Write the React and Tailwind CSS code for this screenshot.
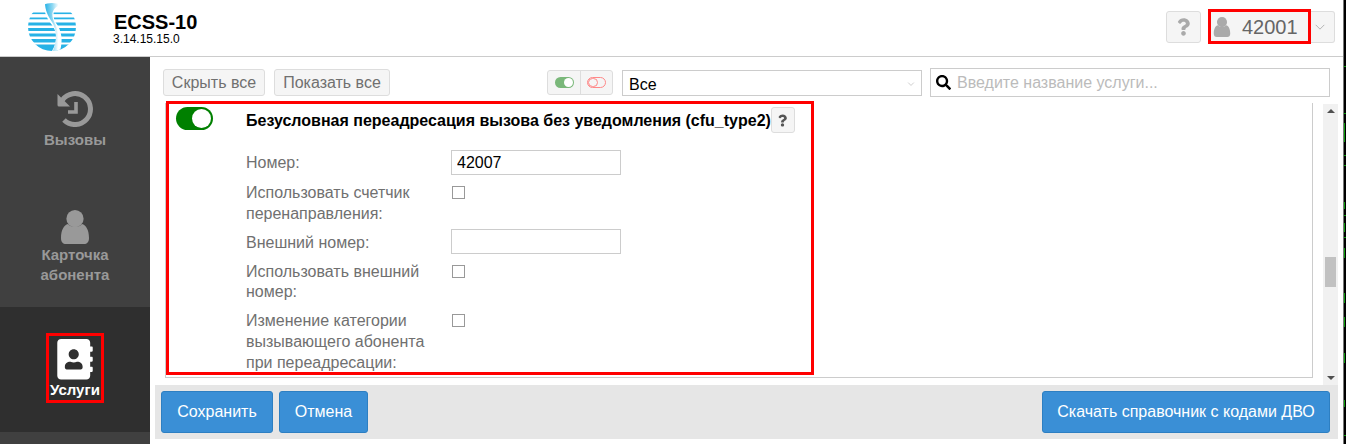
import React from "react";
import { FaAddressBook, FaSearch, FaQuestion } from "react-icons/fa";

const UserIcon = ({ className }) => (
  <svg viewBox="0 0 30 34" className={className} fill="currentColor">
    <circle cx="15" cy="8.7" r="8.6" />
    <path d="M1 28 C1 20 4 15 8 14 C11 17.8 19 17.8 22 14 C26 15 29 20 29 28 C29 32 27 34 24 34 H6 C3 34 1 32 1 28 Z" />
  </svg>
);

const HistoryIcon = ({ className }) => (
  <svg viewBox="0 0 36 36" className={className} fill="none" stroke="currentColor">
    <path d="M5.3 9.1 A15.5 15.5 0 1 1 7 29" strokeWidth="5" />
    <path d="M0.5 3 V14 Q0.5 15.5 2 15.5 H13 Z" fill="currentColor" stroke="none" />
    <path d="M19 11 V21 H11" strokeWidth="3.6" />
  </svg>
);

const Chevron = ({ className }) => (
  <svg viewBox="0 0 12 7" className={className} fill="none" stroke="currentColor" strokeWidth="1">
    <path d="M1 1 L6 6 L11 1" />
  </svg>
);

const Logo = () => (
  <svg viewBox="0 0 48 48" className="w-[48px] h-[48px]">
    <defs>
      <clipPath id="lc"><circle cx="24" cy="24" r="24" /></clipPath>
      <linearGradient id="lg" x1="0" y1="0" x2="1" y2="0">
        <stop offset="0" stopColor="#27b2e6" />
        <stop offset="0.55" stopColor="#8fd8f2" />
        <stop offset="1" stopColor="#ffffff" />
      </linearGradient>
    </defs>
    <g clipPath="url(#lc)" fill="#27b2e6">
      <rect x="0" y="9.5" width="48" height="1.6" />
      <rect x="0" y="14.5" width="48" height="1.8" />
      <rect x="0" y="19.5" width="48" height="3" />
      <rect x="0" y="25" width="48" height="3" />
      <rect x="0" y="30.5" width="48" height="3" />
      <rect x="0" y="36" width="48" height="3.5" />
      <rect x="0" y="41.5" width="48" height="6.5" />
      <path d="M16 0 C16 8 18 15 24 22 C29 29 30 38 24 48 L32 48 C35 38 34 28 28 20 C24 14 25 6 30 0 Z" fill="#ffffff" />
      <path d="M17 0 C17 7 20 13 24 19 C28 25 30 36 25 48 L29 48 C32 36 30 26 26.5 19.5 C23.5 13 23 7 30 3 L30 0 Z" fill="url(#lg)" />
    </g>
  </svg>
);

const NavItem = ({ icon, label, active, bump = "" }) => (
  <div className={`h-[125px] flex items-center justify-center ${active ? "bg-[#2f2f2f]" : "bg-[#404040]"}`}>
    <div className={`flex flex-col items-center text-center font-bold text-[15px] leading-[20.5px] ${bump} ${active ? "text-white border-[3px] border-[#ff0000] w-[58px] h-[70px] pt-[3px]" : "text-[#999]"}`}>
      {icon}
      {label}
    </div>
  </div>
);

const BlueBtn = ({ children, className = "" }) => (
  <button className={`h-[42px] bg-[#3a8fd6] border border-[#2d7fc2] rounded-[3px] text-white text-[16px] ${className}`}>
    {children}
  </button>
);

const GrayBtn = ({ children, className = "" }) => (
  <button className={`bg-[#f5f5f5] border border-[#ddd] rounded-[3px] text-[#707070] text-[16px] ${className}`}>
    {children}
  </button>
);

const Check = () => <input type="checkbox" className="appearance-none w-[13px] h-[13px] border border-[#999] bg-white block" />;

const Marks = [
  [66, 1, 2], [113, 1, 2], [123, 19, 1], [155, 1, 2], [165, 1, 2], [202, 7, 1], [215, 1, 2], [223, 9, 1], [237, 1, 2],
  [248, 10, 1], [293, 10, 1], [317, 10, 1], [353, 10, 1], [400, 7, 1], [435, 1, 2],
];

export default function App() {
  return (
    <div className="w-[1346px] h-[444px] flex overflow-hidden bg-white text-[16px] [font-family:'Liberation_Sans',Arial,sans-serif]">
      <div className="w-[1343px] flex flex-col">
        {/* header */}
        <header className="h-[57px] flex items-start border-b border-[#ccc] shrink-0">
          <div className="ml-[28px] mt-[3px]"><Logo /></div>
          <div className="ml-[38px] mt-[11px] text-black">
            <div className="font-bold text-[20px] leading-[23px]">ECSS-10</div>
            <div className="text-[12px] leading-[10px] -ml-[1px]">3.14.15.15.0</div>
          </div>
          <div className="ml-auto mr-[8px] mt-[9px] flex items-start">
            <GrayBtn className="w-[35px] h-[32px] mt-[2px] flex items-center justify-center">
              <FaQuestion className="w-[13px] h-[18px] text-[#aaa]" />
            </GrayBtn>
            <div className="ml-[7px] w-[103px] h-[35px] border-[3px] border-[#ff0000] bg-[#f5f5f5] flex items-center pl-[2px]">
              <UserIcon className="w-[18px] h-[20px] text-[#aaa]" />
              <span className="ml-[11px] text-[20px] text-[#666]">42001</span>
            </div>
            <GrayBtn className="w-[24px] h-[32px] mt-[2px] flex items-center justify-center pr-[5px] border-l-0 rounded-l-none">
              <Chevron className="w-[12px] h-[6px] text-[#aaa]" />
            </GrayBtn>
          </div>
        </header>

        <div className="flex flex-1 min-h-0">
          {/* sidebar */}
          <nav className="w-[150px] bg-[#404040] shrink-0">
            <NavItem bump="mt-[3px]" icon={<HistoryIcon className="w-[36px] h-[36px] mb-[3px] text-[#999]" />} label="Вызовы" />
            <NavItem bump="mt-[6px]" icon={<UserIcon className="w-[30px] h-[34px] mb-[1px] text-[#999]" />} label={<span>Карточка<br />абонента</span>} />
            <NavItem bump="mb-[3px]" active icon={<FaAddressBook className="w-[38px] h-[43px] text-white" />} label="Услуги" />
          </nav>

          {/* main */}
          <main className="flex-1 min-w-0 flex flex-col">
            {/* toolbar */}
            <div className="h-[44px] shrink-0 pt-[11px] pb-[4px] pl-[13px] flex items-center">
              <GrayBtn className="w-[102px] h-[27px]">Скрыть все</GrayBtn>
              <GrayBtn className="ml-[9px] w-[116px] h-[27px]">Показать все</GrayBtn>
              <div className="ml-[157px] w-[66px] h-[25px] flex bg-[#f5f5f5] border border-[#ddd] rounded-[3px]">
                <div className="w-[33px] flex items-center justify-center border-r border-[#ddd]">
                  <div className="w-[19px] h-[11px] rounded-full bg-[#7ab87a] flex justify-end items-center pr-[1px]">
                    <div className="w-[9px] h-[9px] rounded-full bg-white" />
                  </div>
                </div>
                <div className="flex-1 flex items-center justify-center">
                  <div className="w-[19px] h-[11px] rounded-full border border-[#f88] flex items-center">
                    <div className="w-[10px] h-[9px] rounded-full border border-[#f88]" />
                  </div>
                </div>
              </div>
              <div className="relative ml-[9px] w-[300px] h-[26px]">
                <select className="appearance-none w-full h-full bg-white border border-[#ccc] pl-[6px] pt-[2px] text-[16px] text-black outline-none">
                  <option>Все</option>
                </select>
                <Chevron className="absolute right-[7px] top-[12px] w-[8px] h-[4px] text-[#aaa]" />
              </div>
              <div className="ml-[8px] w-[400px] h-[29px] flex items-center border border-[#ccc] pl-[5px]">
                <FaSearch className="w-[15px] h-[15px] text-black shrink-0" />
                <input
                  placeholder="Введите название услуги..."
                  className="ml-[6px] flex-1 min-w-0 text-[16px] outline-none placeholder:text-[#bbb]"
                />
              </div>
            </div>

            {/* panel row */}
            <div className="h-[284px] shrink-0 flex pl-[15px]">
              <div className="w-[1148px] h-[275px] mt-[2px] border-l border-r border-b border-[#ccc]">
                <section className="-mt-[2px] w-[648px] h-[274px] border-[3px] border-[#ff0000] overflow-hidden">
                  <div className="flex items-start pl-[7px] pt-[3px]">
                    <div className="w-[37px] h-[23px] rounded-full bg-[#008000] flex items-center justify-end pr-[2px]">
                      <div className="w-[19px] h-[19px] rounded-full bg-white" />
                    </div>
                    <h3 className="ml-[33px] mt-[3px] font-bold text-[16px] leading-[21px] text-black whitespace-nowrap">
                      Безусловная переадресация вызова без уведомления (cfu_type2)
                    </h3>
                    <button className="w-[24px] h-[26px] bg-[#f5f5f5] border border-[#ddd] rounded-[3px] flex items-center justify-center">
                      <FaQuestion className="w-[9px] h-[13px] text-[#555]" />
                    </button>
                  </div>
                  <div className="pl-[77px] text-[#707070] leading-[20.8px]">
                    <div className="mt-[17px] flex items-start h-[25px]">
                      <label className="w-[205px] pt-[3px]">Номер:</label>
                      <input defaultValue="42007" className="w-[170px] h-[25px] border border-[#ccc] px-[5px] text-black outline-none" />
                    </div>
                    <div className="mt-[8px] flex items-start">
                      <label className="w-[205px] pr-[15px]">Использовать счетчик перенаправления:</label>
                      <div className="ml-[1px] mt-[3px]"><Check /></div>
                    </div>
                    <div className="mt-[4px] flex items-start h-[25px]">
                      <label className="w-[205px] pt-[4px]">Внешний номер:</label>
                      <input className="w-[170px] h-[25px] border border-[#ccc] px-[5px] text-black outline-none" />
                    </div>
                    <div className="mt-[8px] flex items-start">
                      <label className="w-[205px] pr-[15px]">Использовать внешний номер:</label>
                      <div className="ml-[1px] mt-[3px]"><Check /></div>
                    </div>
                    <div className="mt-[8px] flex items-start">
                      <label className="w-[205px] pr-[15px]">Изменение категории вызывающего абонента при переадресации:</label>
                      <div className="ml-[1px] mt-[3px]"><Check /></div>
                    </div>
                  </div>
                </section>
              </div>

              {/* scrollbar */}
              <div className="ml-[10px] mt-[3px] w-[15px] h-[281px] bg-[#f1f1f1] flex flex-col items-center">
                <div className="mt-[5px] w-0 h-0 border-l-[4px] border-r-[4px] border-b-[4px] border-l-transparent border-r-transparent border-b-[#505050]" />
                <div className="mt-[144px] w-[11px] h-[30px] bg-[#c1c1c1]" />
                <div className="mt-auto mb-[5px] w-0 h-0 border-l-[4px] border-r-[4px] border-t-[4px] border-l-transparent border-r-transparent border-t-[#505050]" />
              </div>
            </div>

            {/* footer */}
            <div className="h-[54px] shrink-0 ml-[5px] w-[1183px] bg-[#e6e6e6] flex items-center px-[6px]">
              <BlueBtn className="w-[112px]">Сохранить</BlueBtn>
              <BlueBtn className="ml-[6px] w-[89px]">Отмена</BlueBtn>
              <BlueBtn className="ml-auto mr-[2px] w-[288px]">Скачать справочник с кодами ДВО</BlueBtn>
            </div>
          </main>
        </div>
      </div>

      {/* neighbouring window sliver */}
      <div className="w-[3px] h-[444px] bg-black border-l border-[#777] shrink-0">
        <svg width="2" height="444" className="block">
          {Marks.map(([y, h, w]) => (
            <rect key={y} x="0" y={y} width={w} height={h} fill="#0a9a0a" />
          ))}
        </svg>
      </div>
    </div>
  );
}
